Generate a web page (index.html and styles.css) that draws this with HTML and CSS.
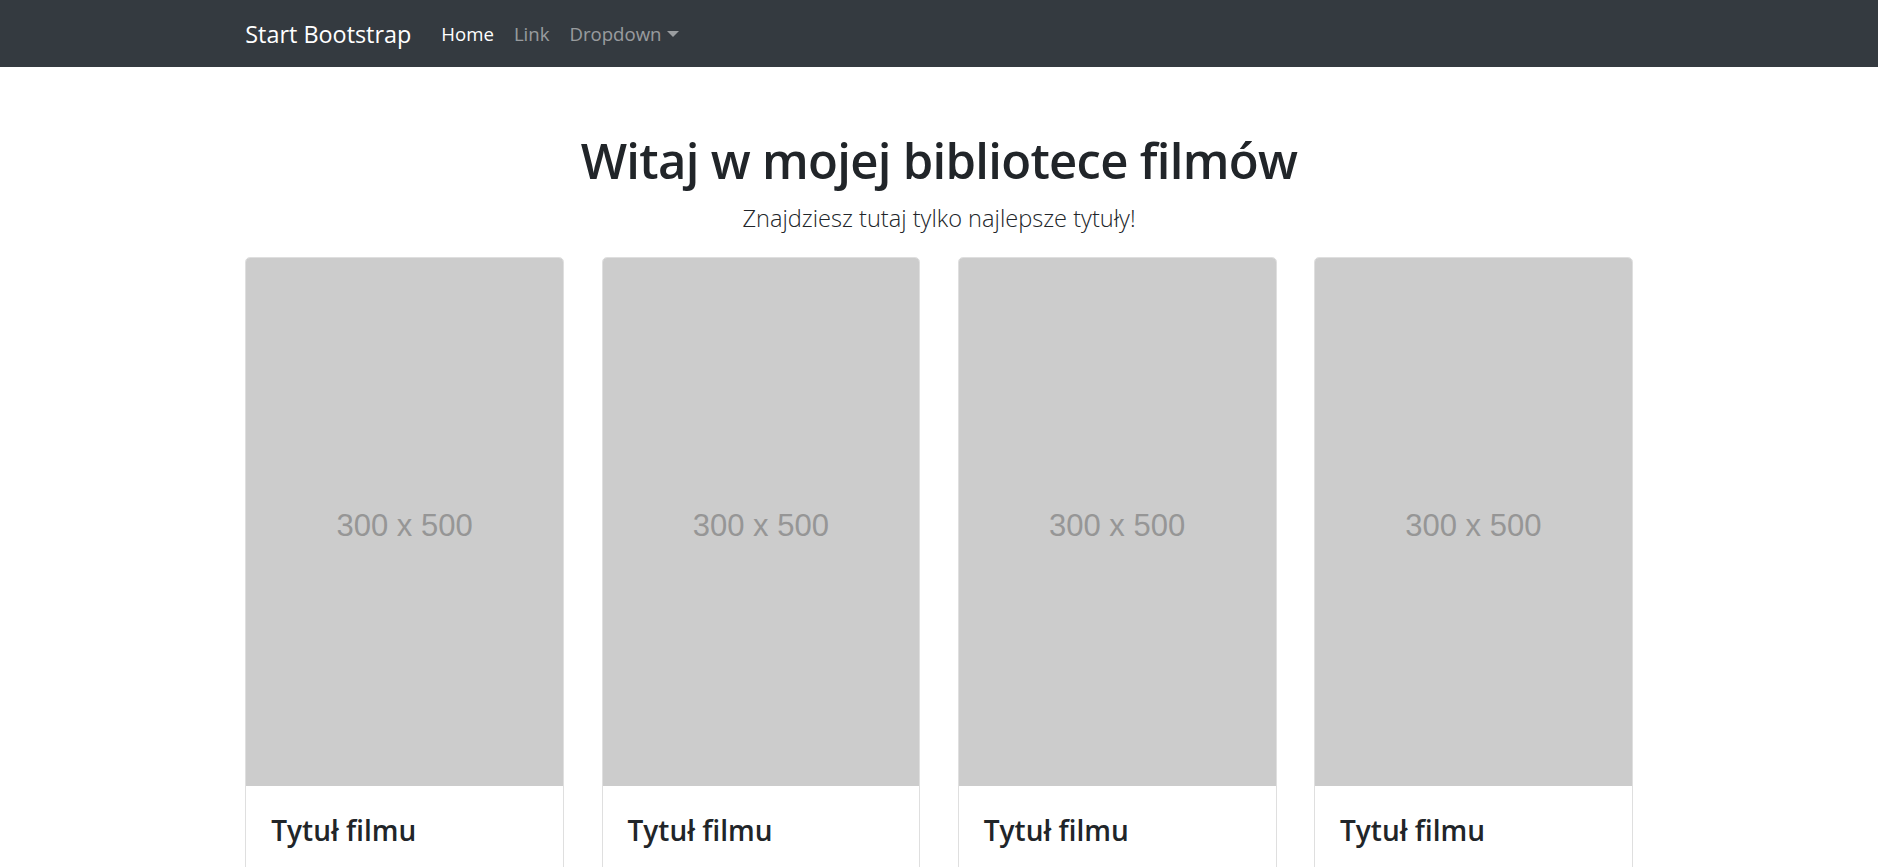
FILE: index.html
```html
<!DOCTYPE html>
<html lang="pl">
<head>
<meta charset="utf-8">
<title>Biblioteka filmów</title>
<link rel="stylesheet" href="styles.css">
</head>
<body>
<nav class="navbar">
  <div class="container nav-inner">
    <a class="brand" href="#">Start Bootstrap</a>
    <ul class="nav">
      <li><a class="nav-link active" href="#">Home</a></li>
      <li><a class="nav-link" href="#">Link</a></li>
      <li><a class="nav-link dropdown" href="#">Dropdown<span class="caret"></span></a></li>
    </ul>
  </div>
</nav>
<main class="container content">
  <h1 class="title">Witaj w mojej bibliotece filmów</h1>
  <p class="lead">Znajdziesz tutaj tylko najlepsze tytuły!</p>
  <div class="cards">
    <div class="card">
      <div class="poster"><span>300 x 500</span></div>
      <div class="card-body"><h4 class="card-title">Tytuł filmu</h4></div>
    </div>
    <div class="card">
      <div class="poster"><span>300 x 500</span></div>
      <div class="card-body"><h4 class="card-title">Tytuł filmu</h4></div>
    </div>
    <div class="card">
      <div class="poster"><span>300 x 500</span></div>
      <div class="card-body"><h4 class="card-title">Tytuł filmu</h4></div>
    </div>
    <div class="card">
      <div class="poster"><span>300 x 500</span></div>
      <div class="card-body"><h4 class="card-title">Tytuł filmu</h4></div>
    </div>
  </div>
</main>
</body>
</html>
```
FILE: styles.css
```css
html {
  scrollbar-width: none;
}
body {
  margin: 0;
  font-family: "Open Sans", "Noto Sans", sans-serif;
  color: #212529;
  background: #fff;
}
.container {
  width: 1425px;
  box-sizing: border-box;
  padding: 0 18.75px;
  margin: 0 auto;
}
.navbar {
  background: #343a40;
  height: 67px;
}
.nav-inner {
  display: flex;
  align-items: center;
  height: 100%;
}
.brand {
  color: #fff;
  text-decoration: none;
  font-size: 23.4px;
  margin-right: 20px;
  white-space: nowrap;
}
.nav {
  display: flex;
  list-style: none;
  margin: 0;
  padding: 0;
}
.nav-link {
  display: block;
  padding: 0 10px;
  font-size: 18.6px;
  color: rgba(255, 255, 255, 0.5);
  text-decoration: none;
}
.nav-link.active {
  color: #fff;
}
.caret {
  display: inline-block;
  margin-left: 5px;
  vertical-align: 4px;
  border-top: 6px solid;
  border-left: 6px solid transparent;
  border-right: 6px solid transparent;
}
.content {
  text-align: center;
  padding-top: 63px;
}
.title {
  margin: 0 0 10px;
  font-size: 49px;
  font-weight: 600;
  line-height: 60px;
  letter-spacing: -0.7px;
}
.lead {
  margin: 0 0 20px;
  font-size: 23.6px;
  font-weight: 300;
  line-height: 37px;
}
.cards {
  display: grid;
  grid-template-columns: repeat(4, 318.75px);
  column-gap: 37.5px;
  text-align: left;
}
.card {
  border: 1px solid rgba(0, 0, 0, 0.125);
  border-radius: 5px;
  overflow: hidden;
}
.poster {
  height: 528px;
  background: #ccc;
  display: flex;
  align-items: center;
  justify-content: center;
}
.poster span {
  padding-top: 8px;
  font-family: "Liberation Sans", Arial, sans-serif;
  font-size: 31px;
  color: #969696;
}
.card-body {
  padding: 29px 25px 25px;
}
.card-title {
  margin: 0 0 10px;
  font-size: 28px;
  font-weight: 600;
  line-height: 30px;
}
```
